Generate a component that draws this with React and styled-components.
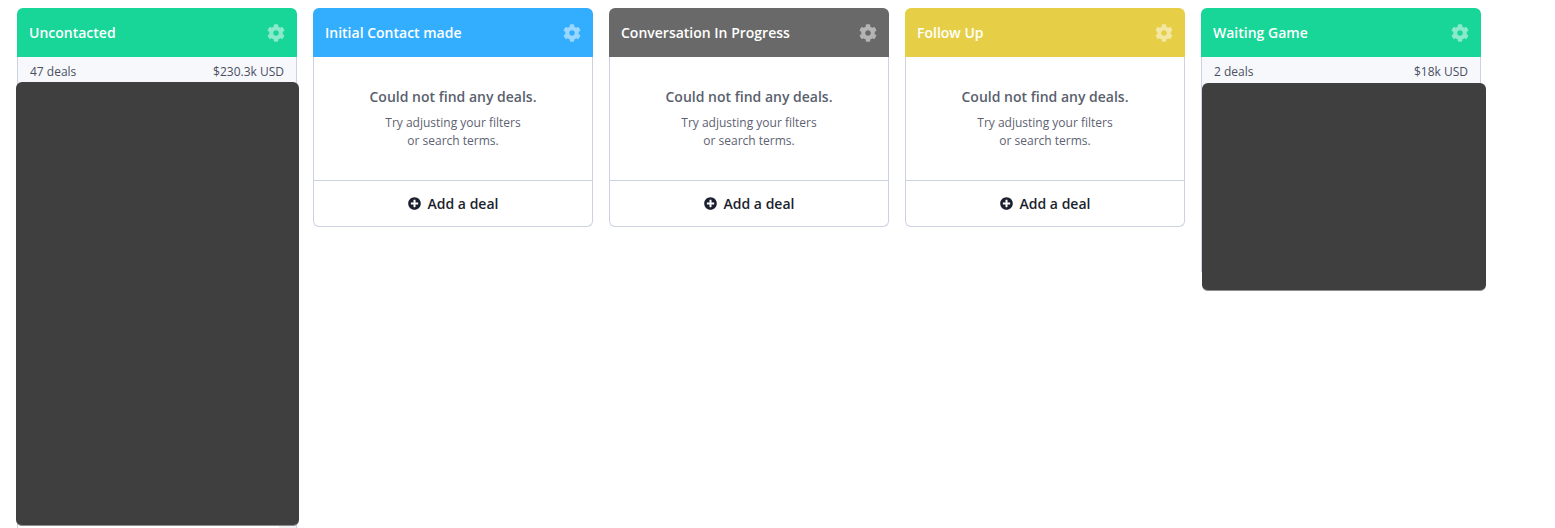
import React from "react";
import styled, { createGlobalStyle } from "styled-components";
import { FaCog, FaPlusCircle } from "react-icons/fa";

const GlobalStyle = createGlobalStyle`
  html, body {
    margin: 0;
    height: 100%;
    overflow: hidden;
    background: #fff;
    font-family: "Open Sans", "Liberation Sans", sans-serif;
  }
`;

const Board = styled.div`
  display: flex;
  align-items: flex-start;
  gap: 16px;
  padding: 8px 17px;
`;

const Column = styled.section`
  position: relative;
  width: 280px;
  flex: none;
`;

const Header = styled.header`
  display: flex;
  align-items: center;
  justify-content: space-between;
  height: 49px;
  padding: 0 12px;
  box-sizing: border-box;
  border-radius: 6px 6px 0 0;
  background: ${(p) => p.$color};
  color: #fff;
`;

const Title = styled.h3`
  margin: 0;
  font-size: 14px;
  font-weight: 600;
`;

const Gear = styled(FaCog)`
  width: 18px;
  height: 18px;
  color: rgba(255, 255, 255, 0.5);
`;

const Summary = styled.div`
  display: flex;
  justify-content: space-between;
  align-items: center;
  height: 29px;
  padding: 0 12px;
  box-sizing: border-box;
  background: #f7f8fc;
  border: solid #cdd2e1;
  border-width: 0 1px;
  color: #4a4f5f;
  font-size: 12px;
  line-height: 29px;
`;

const DealStack = styled.div`
  display: flex;
  justify-content: flex-end;
  align-items: flex-start;
  height: ${(p) => p.$height}px;
  padding-top: ${(p) => p.$offset}px;
  box-sizing: border-box;
  background: #fff;
  border: solid #cdd2e1;
  border-width: 0 1px;
`;

const DealTag = styled.span`
  width: 17px;
  height: 18px;
  background: #eff0f4;
`;

const Body = styled.div`
  border: 1px solid #cdd2e1;
  border-top: 0;
  border-radius: 0 0 6px 6px;
`;

const Empty = styled.div`
  height: 124px;
  padding-top: 30px;
  box-sizing: border-box;
  text-align: center;
  border-bottom: 1px solid #cdd2e1;
`;

const EmptyTitle = styled.div`
  font-size: 14px;
  font-weight: 600;
  line-height: 20px;
  color: #5a5f6e;
`;

const EmptyHint = styled.p`
  margin: 7px 0 0;
  font-size: 12px;
  line-height: 18px;
  color: #5d6272;
`;

const AddDeal = styled.div`
  display: flex;
  align-items: center;
  justify-content: center;
  gap: 7px;
  height: 45px;
  font-size: 14px;
  font-weight: 600;
  color: #1c1f2e;
`;

const Redaction = styled.div`
  position: absolute;
  top: ${(p) => p.$top}px;
  left: ${(p) => p.$left}px;
  width: ${(p) => p.$width}px;
  height: ${(p) => p.$height}px;
  box-sizing: border-box;
  background: #3f3f3f;
  border-bottom: 1px solid #8c8c8c;
  border-radius: 6px;
`;

const columns = [
  {
    title: "Uncontacted",
    color: "#18d598",
    count: "47 deals",
    total: "$230.3k USD",
    stack: 520,
    offset: 436,
    cover: { top: 74, left: -1, width: 283, height: 444 },
  },
  { title: "Initial Contact made", color: "#33aeff" },
  { title: "Conversation In Progress", color: "#696969" },
  { title: "Follow Up", color: "#e6cf47" },
  {
    title: "Waiting Game",
    color: "#18d598",
    count: "2 deals",
    total: "$18k USD",
    stack: 186,
    offset: 0,
    cover: { top: 75, left: 1, width: 284, height: 208 },
  },
];

export default function App() {
  return (
    <Board>
      <GlobalStyle />
      {columns.map((col) => (
        <Column key={col.title}>
          <Header $color={col.color}>
            <Title>{col.title}</Title>
            <Gear />
          </Header>
          {col.count ? (
            <>
              <Summary>
                <span>{col.count}</span>
                <span>{col.total}</span>
              </Summary>
              <DealStack $height={col.stack} $offset={col.offset}>
                {col.offset > 0 && <DealTag />}
              </DealStack>
              <Redaction
                $top={col.cover.top}
                $left={col.cover.left}
                $width={col.cover.width}
                $height={col.cover.height}
              />
            </>
          ) : (
            <Body>
              <Empty>
                <EmptyTitle>Could not find any deals.</EmptyTitle>
                <EmptyHint>
                  Try adjusting your filters
                  <br />
                  or search terms.
                </EmptyHint>
              </Empty>
              <AddDeal>
                <FaPlusCircle size={13} />
                Add a deal
              </AddDeal>
            </Body>
          )}
        </Column>
      ))}
    </Board>
  );
}
